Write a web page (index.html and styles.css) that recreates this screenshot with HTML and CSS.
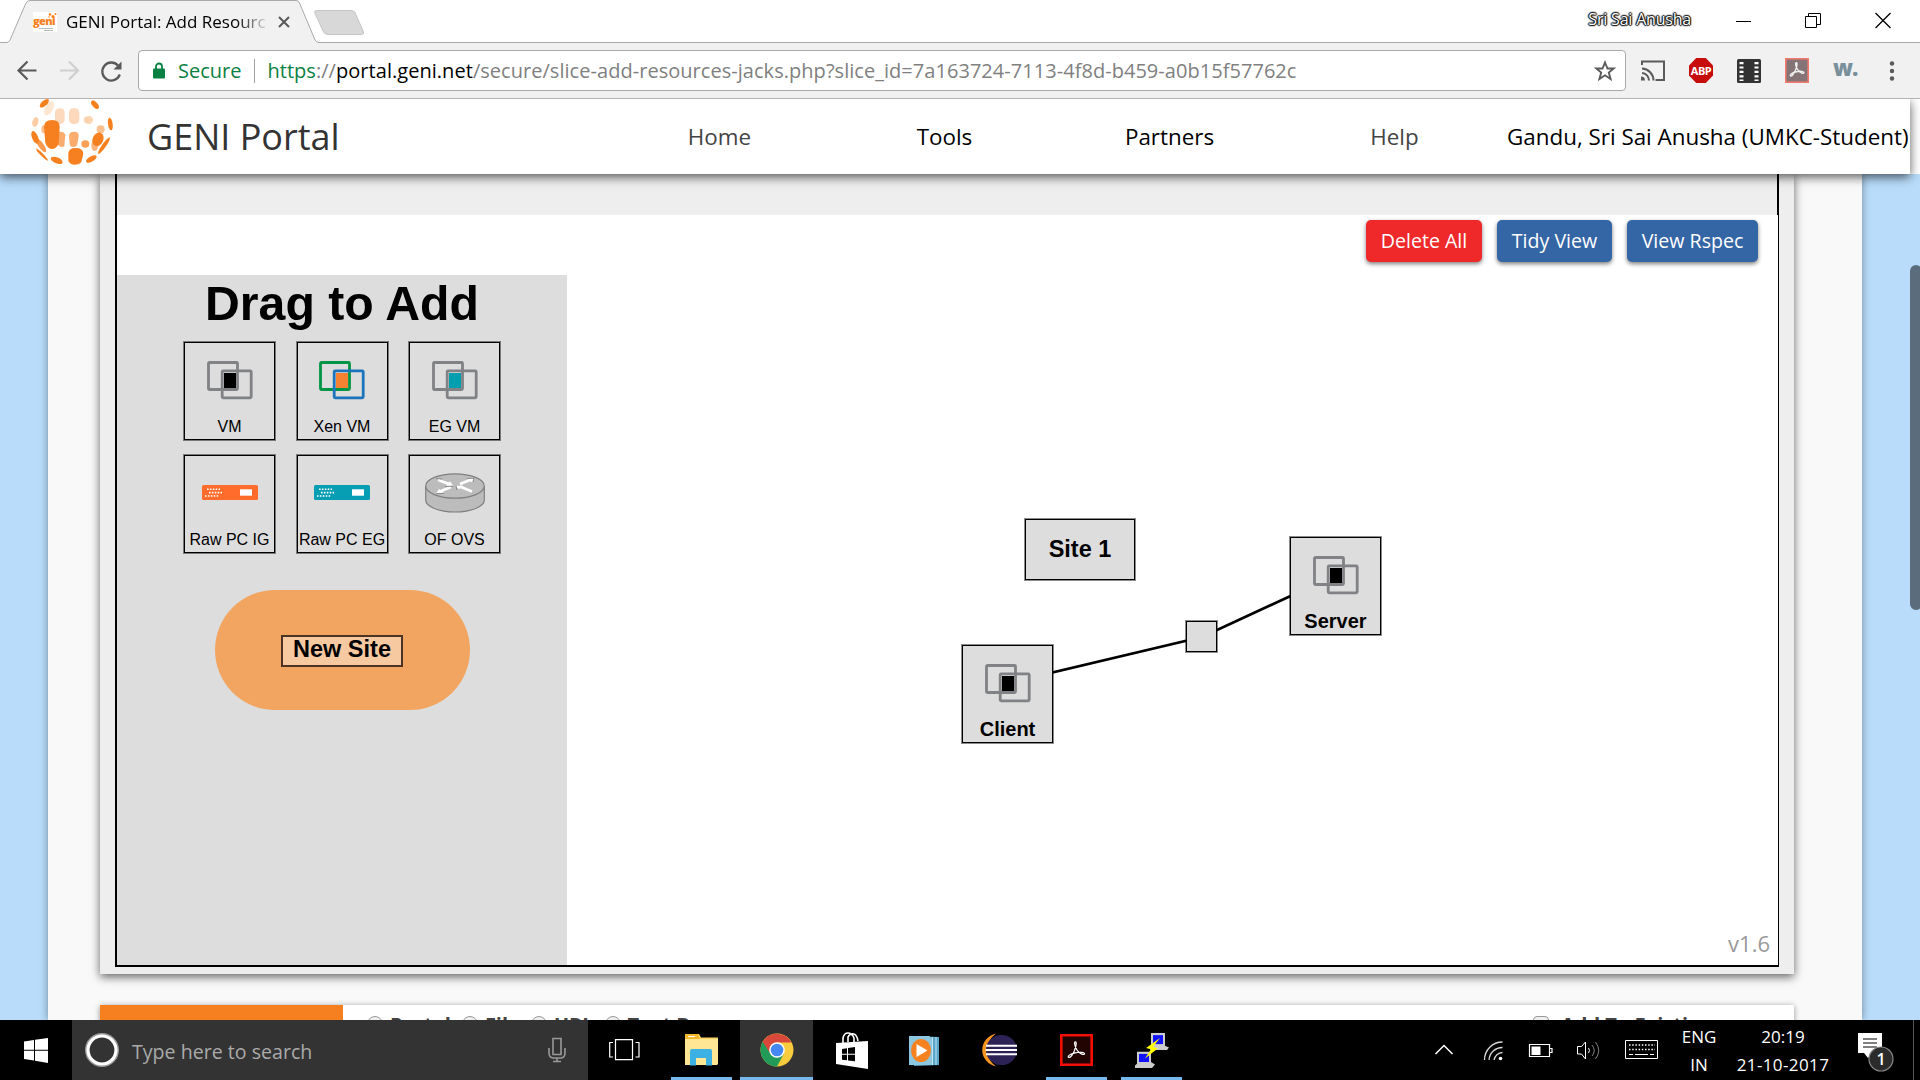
FILE: index.html
```html
<!DOCTYPE html>
<html lang="en">
<head>
<meta charset="utf-8">
<title>GENI Portal: Add Resources</title>
<link rel="stylesheet" href="styles.css">
</head>
<body>
<svg width="0" height="0" class="defs">
  <symbol id="vm" viewBox="0 0 46 39">
    <rect x="17" y="12" width="12" height="16" fill="var(--core,#000)"/>
    <rect x="1.5" y="1.5" width="29" height="27" rx="1" fill="none" stroke="var(--a,#808285)" stroke-width="2.8"/>
    <rect x="15.2" y="9.8" width="29" height="27" rx="1" fill="none" stroke="var(--b,#808285)" stroke-width="2.8"/>
  </symbol>
  <symbol id="pc" viewBox="0 0 56 15">
    <rect width="56" height="15" rx="1.5" fill="currentColor"/>
    <path d="M5 4.3h13M7 7.6h13M3 11h14" stroke="#fff" stroke-width="1.6" stroke-dasharray="1.6 1.3"/>
    <rect x="38" y="4.3" width="12" height="6.4" fill="#fff"/>
  </symbol>
</svg>

<div class="tabstrip">
  <svg class="tabs" width="380" height="43" viewBox="0 0 380 43">
    <path d="M0 42.5H7Q9 42 10 40L26 3Q27.500 .5 30 .5H296Q298.500 .5 299.500 3L315 40Q316.500 42.500 319 42.500H380V43H0Z" fill="#f1f1f1"/>
    <path d="M0 42.5H7Q9 42 10 40L26 3Q27.500 .5 30 .5H296Q298.500 .5 299.500 3L315 40Q316.500 42.500 319 42.500H380" fill="none" stroke="#a9a9a9"/>
    <path d="M317 10.500H351Q354 10.500 355 12.500L363.500 32Q364 34.500 361.500 34.500H328Q325 34.500 323.500 32L314.800 13Q314 10.500 317 10.500Z" fill="#d8d8d8" stroke="#c4c4c4"/>
  </svg>
  <div class="tab">
    <span class="favicon"><b>geni</b><svg width="24" height="20"><g fill="#f68020"><circle cx="17" cy="2.500" r="1.300"/><circle cx="20" cy="4.500" r="1.600"/><circle cx="22.500" cy="2" r="1"/><circle cx="16" cy="5" r=".8"/></g><path d="M6 16.500h14M11 18.500h9" stroke="#bbb" stroke-width="1"/></svg></span>
    <span class="tab-title">GENI Portal: Add Resourc</span>
    <svg width="12" height="12" viewBox="0 0 12 12"><path d="M1 1l10 10M11 1L1 11" stroke="#5a5a5a" stroke-width="2"/></svg>
  </div>
  <div class="window-buttons">
    <span class="profile">Sri Sai Anusha</span>
    <svg width="15" height="16"><path d="M0 8.500h15" stroke="#000"/></svg>
    <svg width="16" height="17"><path d="M.5 4.500h11v11H.5zM3.500 4.500v-3h12v11h-4" fill="none" stroke="#000"/></svg>
    <svg width="16" height="17"><path d="M.5 1l15 15M15.500 1l-15 15" stroke="#000" stroke-width="1.300"/></svg>
  </div>
</div>

<div class="toolbar">
  <svg class="nav-icons" width="110" height="24" viewBox="14 58 110 24">
    <path d="M36.500 69.500H19M27.500 60.500l-9 9 9 9" fill="none" stroke="#5a5a5a" stroke-width="2.200"/>
    <path d="M60 69.500h17.500M69 60.500l9 9-9 9" fill="none" stroke="#cfcfcf" stroke-width="2.200"/>
    <path d="M118 64.500a9 9 0 1 0 1.800 9" fill="none" stroke="#5a5a5a" stroke-width="2.300"/>
    <path d="M121.500 60.500v8h-8z" fill="#5a5a5a"/>
  </svg>
  <div class="omnibox">
    <svg width="12" height="17" viewBox="0 0 12 17"><rect y="6.500" width="12" height="10" rx="1" fill="#0b8043"/><path d="M3 7V4.500a3 3 0 0 1 6 0V7" fill="none" stroke="#0b8043" stroke-width="1.800"/></svg>
    <span class="secure">Secure</span>
    <i></i>
    <span class="url"><b>https</b>://<em>portal.geni.net</em>/secure/slice-add-resources-jacks.php?slice_id=7a163724-7113-4f8d-b459-a0b15f57762c</span>
    <svg class="star" width="22" height="22" viewBox="0 0 22 22"><path d="M11 2.500l2.500 6h6.200l-4.900 4 1.800 6.500L11 15.300 5.400 19l1.800-6.500-4.900-4h6.200z" fill="none" stroke="#5a5a5a" stroke-width="1.900"/></svg>
  </div>
  <div class="extensions">
    <svg width="24" height="24" viewBox="0 0 24 24"><path d="M1 6V2.500h22v18.500h-8.500" fill="none" stroke="#5a5a5a" stroke-width="2"/><path d="M1 9.500a12 12 0 0 1 11.500 12M1 14a7.500 7.500 0 0 1 7 7.500" fill="none" stroke="#5a5a5a" stroke-width="2"/><path d="M0 17.500a4 4 0 0 1 4 4H0z" fill="#5a5a5a"/></svg>
    <span class="abp">ABP</span>
    <svg width="24" height="24"><rect width="24" height="24" rx="1.500" fill="#333"/><path d="M4.500 3v19M19.500 3v19" stroke="#fff" stroke-width="4" stroke-dasharray="2.200 2.200"/></svg>
    <svg width="24" height="25" viewBox="0 0 24 25"><rect x=".8" y=".8" width="22.400" height="23.400" fill="#857475" stroke="#f0786c" stroke-width="1.600"/><path transform="translate(-4.500 -3.500)" d="M10 21.500c-1-1 1.500-3.500 6-4.300 4-.8 7.500-.3 7.500 1s-4 .5-6.300-3-2.500-7-1.300-7 .6 4-1 7.500-3.700 6.600-4.900 5.800z" fill="none" stroke="#eee" stroke-width="1.400"/></svg>
    <span class="w-ext">w.</span>
    <svg class="menu" width="6" height="24"><g fill="#5a5a5a"><circle cx="3" cy="4.500" r="2.200"/><circle cx="3" cy="12" r="2.200"/><circle cx="3" cy="19.500" r="2.200"/></g></svg>
  </div>
</div>

<header class="site-header">
  <svg class="logo" width="88" height="75" viewBox="84 297 264 225">
    <g fill="#f68020">
      <ellipse cx="133" cy="310" rx="17" ry="8" transform="rotate(-42 133 310)"/>
      <ellipse cx="285" cy="314" rx="15" ry="8" transform="rotate(48 285 314)"/>
      <ellipse cx="147" cy="325" rx="23" ry="12" transform="rotate(-62 147 325)" opacity=".2"/>
      <rect x="165" y="325" width="29" height="47" rx="13" opacity=".3"/>
      <rect x="207" y="325" width="31" height="47" rx="13" opacity=".3"/>
      <ellipse cx="265" cy="360" rx="14" ry="12" opacity=".35"/>
      <ellipse cx="106" cy="366" rx="9" ry="15" transform="rotate(15 106 366)" opacity=".4"/>
      <ellipse cx="331" cy="372" rx="7" ry="19" transform="rotate(-8 331 372)"/>
      <ellipse cx="302" cy="388" rx="12" ry="12" opacity=".5"/>
      <ellipse cx="130" cy="388" rx="6" ry="12" opacity=".5"/>
      <path d="M132 382q0-22 24-22t23 22l-3 49q-8 16-20 16t-20-18z"/>
      <path d="M176 396q18-3 20 10l-3 33q-12 6-19-5z" opacity=".65"/>
      <path d="M207 408q0-13 15-13t14 13l-4 25q-2 8-12 8t-11-9z" opacity=".65"/>
      <ellipse cx="256" cy="432" rx="12" ry="11" opacity=".75"/>
      <ellipse cx="105" cy="412" rx="9" ry="20" transform="rotate(-22 105 412)"/>
      <ellipse cx="123" cy="436" rx="8" ry="25" transform="rotate(-35 123 436)" opacity=".8"/>
      <ellipse cx="284" cy="437" rx="10" ry="16" opacity=".6"/>
      <ellipse cx="294" cy="418" rx="16" ry="21" transform="rotate(25 294 418)"/>
      <ellipse cx="312" cy="437" rx="6" ry="30" transform="rotate(35 312 437)"/>
      <ellipse cx="126" cy="464" rx="4" ry="25" transform="rotate(-45 126 464)"/>
      <path d="M205 461q0-17 22-17t23 17l-6 25q-6 8-20 8t-19-12z"/>
      <ellipse cx="170" cy="481" rx="19" ry="9" transform="rotate(22 170 481)"/>
      <ellipse cx="274" cy="477" rx="18" ry="8" transform="rotate(-30 274 477)"/>
    </g>
  </svg>
  <h1>GENI Portal</h1>
  <nav><span class="dim">Home</span><span>Tools</span><span>Partners</span><span class="dim">Help</span></nav>
  <span class="user">Gandu, Sri Sai Anusha (UMKC-Student)</span>
</header>

<div class="viewport">
  <main class="page">
    <section class="card">
      <div class="editor">
        <div class="editor-top"></div>
        <div class="actions">
          <button class="danger">Delete All</button>
          <button>Tidy View</button>
          <button>View Rspec</button>
        </div>
        <div class="workspace">
          <aside class="palette">
            <h2>Drag to Add</h2>
            <div class="tiles">
              <div class="node"><svg width="46" height="39"><use href="#vm"/></svg><span>VM</span></div>
              <div class="node xen"><svg width="46" height="39"><use href="#vm"/></svg><span>Xen VM</span></div>
              <div class="node eg"><svg width="46" height="39"><use href="#vm"/></svg><span>EG VM</span></div>
              <div class="node ig-pc"><svg width="56" height="15"><use href="#pc"/></svg><span>Raw PC IG</span></div>
              <div class="node eg-pc"><svg width="56" height="15"><use href="#pc"/></svg><span>Raw PC EG</span></div>
              <div class="node ovs"><svg width="60" height="40" viewBox="0 0 60 40"><path d="M.7 13v14c0 6.500 13 12 29.300 12s29.300-5.500 29.300-12V13" fill="#bcbcbc" stroke="#808080" stroke-width="1.200"/><ellipse cx="30" cy="13" rx="29.300" ry="12.200" fill="#bcbcbc" stroke="#808080" stroke-width="1.200"/><g stroke="#fff" stroke-width="2.600" fill="none"><path d="M13 7l11 4M47 18.500l-11-4.500M16 18l10-4M35 11l10-4"/></g><path d="M28 12.500l-7 .3 4-4.500zM31 13l7-.5-4 4zM11 20.500l3-4.500 5 3.500zM49 5l-2 4.500-5-3.500z" fill="#fff"/><path d="M11 5.500l6 .5M20 13.500h8M49 5l-1 4M11 20.500h8M31 13l1 4M42 5.500h7" stroke="#777" stroke-width=".7" fill="none"/></svg><span>OF OVS</span></div>
            </div>
            <div class="new-site"><span>New Site</span></div>
          </aside>
          <div class="canvas">
            <svg class="links" width="1211" height="690" viewBox="567 275 1211 690"><path d="M1008 683L1202 637L1336 575" fill="none" stroke="#000" stroke-width="2.700"/></svg>
            <div class="site">Site 1</div>
            <div class="joint"></div>
            <div class="node client"><svg width="46" height="39"><use href="#vm"/></svg><span>Client</span></div>
            <div class="node server"><svg width="46" height="39"><use href="#vm"/></svg><span>Server</span></div>
            <span class="version">v1.6</span>
          </div>
        </div>
      </div>
    </section>
    <section class="source">
      <div class="source-label"></div>
      <div class="choices"><i></i><b>Portal</b><i></i><b>File</b><i></i><b>URL</b><i></i><b>Text Box</b></div>
      <div class="choices add"><i class="check"></i><b>Add To Existing</b></div>
    </section>
  </main>
  <div class="scroll-thumb"></div>
</div>

<footer class="taskbar">
  <div class="start"><svg width="24" height="25" viewBox="0 0 24 25"><path d="M0 3.500l10-1.500v9.800H0zM11 1.800L24 0v11.800H11zM0 12.800h10v9.700L0 21zM11 12.800h13V25l-13-2.200z" fill="#fff"/></svg></div>
  <div class="search">
    <svg width="34" height="34" viewBox="0 0 34 34"><circle cx="17" cy="17" r="15" fill="none" stroke="#999" stroke-width="4"/><circle cx="17" cy="17" r="14" fill="none" stroke="#fff" stroke-width="3.200"/></svg>
    <span>Type here to search</span>
    <svg class="mic" width="18" height="26" viewBox="0 0 18 26"><path d="M5 1.500h8v16H5zM1 11v5q0 4.500 4 5h8q4-.5 4-5v-5M9 21v3.500M5 24.500h8" fill="none" stroke="#999" stroke-width="1.600"/></svg>
  </div>
  <div class="apps">
    <div class="nudge"><svg width="31" height="22"><path d="M6.500 .6h17v20h-17zM4 3.500H.700v14.500H4M26.500 3.500h3.500v14.500h-3.500" fill="none" stroke="#fff" stroke-width="1.200"/></svg></div>
    <div class="open"><svg width="33" height="32" viewBox="0 0 33 32"><path d="M0 2q0-2 2-2h12l2 3.500h17V29q0 2-2 2H2q-2 0-2-2z" fill="#fcd462"/><path d="M0 5h33v24q0 2-2 2H0z" fill="#ffe694"/><path d="M0 0h13l2 5H0z" fill="#f4b92c"/><path d="M3 2.500h7" stroke="#fff"/><path d="M5 31.500V17q0-2 2-2h18q2 0 2 2v14.500h-6V24H11v7.500z" fill="#3db1e3"/></svg></div>
    <div class="open active"><svg width="34" height="34" viewBox="0 0 34 34"><circle cx="17" cy="17" r="16.500" fill="#f9cc3d"/><path d="M17 17L2.700 8.800A16.500 16.500 0 0 0 17 33.500l7-13z" fill="#229b58"/><path d="M2.700 8.800A16.500 16.500 0 0 1 31.500 9.500H17L10 20z" fill="#d9483b"/><circle cx="17" cy="17" r="7.800" fill="#fff"/><circle cx="17" cy="17" r="6.300" fill="#4587f3"/></svg></div>
    <div><svg width="32" height="37" viewBox="0 0 32 37"><path d="M7 11V6q1-5 5-5t6 5v4M12 10V5q2-4 6-3 3 1 4 7" fill="none" stroke="#fff" stroke-width="1.600"/><path d="M0 11l32-2v28L0 32z" fill="#fff"/><path d="M6 17l5-.7v5.500H6zM12 16l7-1v6.800h-7zM6 22.800h5v5.500l-5-.6zM12 22.800h7v6.500l-7-.9z" fill="#000"/></svg></div>
    <div class="nudge"><svg width="30" height="31" viewBox="0 0 30 31"><path d="M5 1l25 1v28l-25 1z" fill="#58a5c9"/><path d="M0 1h20l3 2v27H0z" fill="#8cc7df"/><path d="M23.500 2v28M27 2v28" stroke="#c4e6f2"/><ellipse cx="12" cy="15.500" rx="10" ry="11.500" fill="#f58220"/><path d="M7.500 9l11 6.500-11 6.500z" fill="#fff"/></svg></div>
    <div class="nudge"><svg width="36" height="34" viewBox="0 0 36 36" preserveAspectRatio="none"><path d="M15 .5A18 18 0 0 0 15 35.500 22 22 0 0 1 15 .500z" fill="#f7941e"/><ellipse cx="20.500" cy="18" rx="15.500" ry="16" fill="#2c2255"/><path d="M5 13.500h31M4.500 18h31.500M5 22.500h31" stroke="#fff" stroke-width="2"/></svg></div>
    <div class="open"><svg width="33" height="32" viewBox="0 0 33 33" preserveAspectRatio="none"><rect x="1.300" y="1.300" width="30.400" height="30.400" fill="#220503" stroke="#f40f02" stroke-width="2.600"/><path d="M8.500 24c-1.300-.8 1.500-3.600 6.500-4.600 5-1 9.500-.7 9.500 1s-4.800.5-7.400-3.700-3.200-8.700-1.700-8.700.6 4.700-.9 9-4.500 8-6 7z" fill="none" stroke="#fff" stroke-width="1.200"/></svg></div>
    <div class="open"><svg width="34" height="35" viewBox="0 0 34 41" preserveAspectRatio="none"><path d="M16 0h14v15l4 2-2 3H15l1-3z" fill="#ccc"/><rect x="18" y="2.500" width="10" height="10.500" fill="#11f"/><path d="M2 22h14v12l4 3-3 4H0v-3l2-2z" fill="#ccc"/><rect x="4" y="24.500" width="10" height="9.500" fill="#11f"/><path d="M25 6L11 17.500l5 1.500-6 11L23 18l-5-1.500z" fill="#ff0"/></svg></div>
  </div>
  <div class="tray">
    <svg class="tray-icons" width="230" height="30" viewBox="1430 1035 230 30" fill="none" stroke="#fff">
      <path d="M1435.500 1054l8.500-8.500 8.500 8.500" stroke-width="1.500"/>
      <path d="M1484.500 1060a18 18 0 0 1 18-18M1489 1060a13.500 13.500 0 0 1 13.500-12.500M1494 1060a9 9 0 0 1 8.500-7.500" stroke-width="1.300" opacity=".85"/><circle cx="1500.500" cy="1058.500" r="1.800" fill="#fff" stroke="none"/>
      <path d="M1529.500 1044.500h20v12h-20zM1550 1048.500h2v4h-2" stroke-width="1.200"/><path d="M1531.500 1046.500h9v8.500h-9z" fill="#fff" stroke="none"/>
      <path d="M1577.500 1046.500h4l4-4.500v17l-4-5h-4z"/><path d="M1588.500 1048q2 2.500 0 5"/><path d="M1592 1045q4.500 5.500 0 11M1595.500 1042q6.500 8.500 0 17" opacity=".5"/>
      <path d="M1625.500 1040.500h32v18h-32z"/><path d="M1629 1045h26M1629 1049.500h26" stroke-width="1.400" stroke-dasharray="1.500 1.700"/><path d="M1629 1054.500h4M1635 1054.500h13M1650 1054.500h4"/>
    </svg>
    <div class="lang"><span>ENG</span><span>IN</span></div>
    <div class="clock"><span>20:19</span><span class="date">21-10-2017</span></div>
    <svg class="notify" width="40" height="40" viewBox="0 0 40 40"><path d="M1 1h24v20H15l-4 5-4-5H1z" fill="#fff"/><path d="M6 7h14M6 11h14M6 15h14" stroke="#000"/><circle cx="24" cy="27" r="12" fill="#2b2b2b" stroke="#888" stroke-width="1.200"/><text x="24" y="33" text-anchor="middle">1</text></svg>
  </div>
</footer>
</body>
</html>
```
FILE: styles.css
```css
* { box-sizing: border-box; }
body {
  margin: 0; width: 1920px; height: 1080px; overflow: hidden;
  display: flex; flex-direction: column;
  font-family: "Open Sans", "Noto Sans", sans-serif; background: #fff; color: #000;
}
svg { display: block; flex: none; }
span, b { white-space: nowrap; }
.defs { position: absolute; }

.tabstrip { height: 43px; flex: none; display: flex; justify-content: space-between; border-bottom: 1px solid #a9a9a9; position: relative; }
.tabs { position: absolute; left: 0; top: 0; }
.tab { position: relative; display: flex; align-items: center; padding-left: 33px; height: 43px; }
.favicon { width: 24px; height: 20px; background: #fff; position: relative; margin-right: 9px; }
.favicon b { position: absolute; left: 0; top: 2px; font-size: 11px; line-height: 14px; color: #f68020; font-weight: 800; letter-spacing: -.6px; }
.tab-title { width: 199px; margin-right: 13px; font-size: 17px; overflow: hidden; -webkit-mask: linear-gradient(90deg, #000 170px, transparent 204px); mask: linear-gradient(90deg, #000 170px, transparent 204px); }
.window-buttons { display: flex; align-items: center; height: 41px; padding-right: 29px; }
.window-buttons svg + svg { margin-left: 54px; }
.profile { font-size: 16px; line-height: 20px; color: #fff; margin: -3px 45px 0 0; letter-spacing: -.2px; text-shadow: 0 0 2px #000, 0 0 2px #000, 1px 0 1px #222, -1px 0 1px #222, 0 1px 1px #222, 0 -1px 1px #222; }

.toolbar { height: 56px; flex: none; background: #f1f1f1; border-bottom: 1px solid #b4b4b4; display: flex; align-items: center; padding-left: 14px; }
.omnibox { width: 1488px; height: 41px; margin-left: 14px; background: #fff; border: 1px solid #a9a9a9; border-radius: 4px; display: flex; align-items: center; padding: 0 9px 0 14px; font-size: 20px; }
.omnibox i { width: 1px; height: 24px; background: #a0a0a0; }
.secure { color: #0b8043; margin: 0 13px 0 13px; }
.url { margin-left: 12px; color: #808080; letter-spacing: .04px; }
.url b { font-weight: 400; color: #0b8043; }
.url em { font-style: normal; color: #000; }
.star { margin-left: auto; }
.extensions { display: flex; align-items: center; gap: 24px; padding-left: 15px; }
.menu { margin-left: 8px; }
.abp { width: 24px; height: 25px; background: #c70d0c; color: #fff; font: 700 11px/25px "Open Sans", sans-serif; text-align: center; letter-spacing: -.5px; clip-path: polygon(30% 0, 70% 0, 100% 30%, 100% 70%, 70% 100%, 30% 100%, 0 70%, 0 30%); }
.w-ext { width: 24px; font: 800 22px/24px "Open Sans", sans-serif; color: #78909c; letter-spacing: -1px; margin-top: -8px; }

.site-header { width: 1910px; height: 75px; flex: none; background: #fff; display: flex; align-items: center; padding-left: 28px; position: relative; z-index: 2; box-shadow: 0 3px 10px rgba(0,0,0,.65); clip-path: inset(0 -20px -20px 0); }
h1 { margin: 0 0 0 31px; width: 460px; font-size: 36px; font-weight: 400; line-height: 75px; color: #333; }
nav { display: grid; grid-template-columns: repeat(4, 225px); font-size: 22.4px; text-align: center; }
.dim { color: #444; }
.user { font-size: 22.4px; }

.viewport { flex: 1; min-height: 0; background: #b8dcfa; position: relative; padding: 0 58px 0 48px; overflow: hidden; }
.page { height: 846px; background: #f9f9f9; padding: 0 68px 0 52px; box-shadow: 0 0 8px rgba(0,0,0,.4); }
.card { height: 800px; background: #eee; padding: 0 15px 7px; box-shadow: 0 3px 9px rgba(0,0,0,.6); }
.editor { height: 793px; border: solid #000; border-width: 0 1px 2px 2px; background: #fff; }
.editor-top { height: 41px; background: #eee; border-right: 1px solid #000; }
.actions { height: 60px; display: flex; justify-content: flex-end; gap: 15px; padding: 5px 20px 0 0; }
button { height: 42px; width: 115px; border: 0; border-radius: 5px; background: #3465a4; color: #fff; font: 19.6px "Open Sans", sans-serif; padding: 0 0 2px; box-shadow: 0 2px 4px rgba(0,0,0,.5); }
button.danger { background: #ef2929; width: 116px; }
button:last-child { width: 131px; }
.workspace { display: flex; height: 690px; }

.palette { width: 450px; background: #ddd; font-family: "Liberation Sans", Arial, sans-serif; display: flex; flex-direction: column; align-items: center; }
h2 { margin: 0; font-size: 48.2px; line-height: 56px; height: 67px; }
.tiles { display: grid; grid-template-columns: repeat(3, 91px); gap: 14.500px 21.500px; }
.node { height: 98px; width: 91px; border: 1px solid #000; box-shadow: 0 0 0 1px rgba(0,0,0,.45); background: #ddd; display: flex; flex-direction: column; align-items: center; justify-content: space-between; padding: 18px 0 2px; font: 16px/21px "Liberation Sans", Arial, sans-serif; }
.xen { --a: #009444; --b: #1c75bc; --core: #f58233; }
.eg { --core: #009eae; }
.ig-pc, .eg-pc { padding-top: 29px; }
.ovs { padding-top: 17px; }
.ig-pc { color: #ff6c2c; }
.eg-pc { color: #079db2; }
.ig-pc span, .eg-pc span { color: #000; }
.new-site { width: 255px; height: 120px; margin-top: 37.500px; border-radius: 60px; background: #f2a561; display: flex; align-items: center; justify-content: center; }
.new-site span { width: 122px; height: 32px; border: 2px solid #4b3424; background: #f6c9a1; font-size: 23.500px; font-weight: 700; line-height: 25px; text-align: center; margin-top: 2px; }

.canvas { flex: 1; position: relative; font-family: "Liberation Sans", Arial, sans-serif; font-weight: 700; }
.canvas > * { position: absolute; }
.links { left: 0; top: 0; }
.canvas .node { font-weight: 700; font-size: 20px; }
.client { left: 395px; top: 370px; }
.server { left: 723px; top: 262px; }
.joint { left: 619px; top: 346px; width: 31px; height: 31px; border: 1px solid #000; box-shadow: 0 0 0 1px rgba(0,0,0,.45); background: #ddd; }
.site { left: 458px; top: 244px; width: 110px; height: 61px; border: 1px solid #000; box-shadow: 0 0 0 1px rgba(0,0,0,.45); background: #ddd; font-size: 23.500px; line-height: 58px; text-align: center; }
.version { right: 8px; bottom: 7px; font: 22px/30px "Open Sans", sans-serif; color: #999; }

.source { margin-top: 31px; height: 90px; background: #fff; display: flex; width: 1694px; box-shadow: 0 1px 6px rgba(0,0,0,.4); }
.source-label { width: 243px; background: #f68020; }
.choices { display: flex; padding: 11px 0 0 24px; font-size: 20px; line-height: 32px; color: #444; }
.choices b { margin: -7px 11px 0 7px; }
.choices i { width: 16px; height: 16px; border: 1.5px solid #999; border-radius: 50%; background: #eee; }
.choices .check { border-radius: 4px; }
.choices .check + b { margin-left: 12px; }
.add { margin-left: auto; width: 285px; }
.scroll-thumb { position: absolute; left: 1910px; top: 91px; width: 12px; height: 345px; border-radius: 6px; background: #5b6d7c; }

.taskbar { height: 60px; flex: none; background: #000; color: #fff; display: flex; z-index: 3; }
.start { width: 72px; display: flex; align-items: center; justify-content: center; }
.search { width: 516px; background: #333; display: flex; align-items: center; padding: 0 22px 0 13px; color: #aaa; font-size: 19.600px; gap: 13px; }
.search span { padding-top: 2px; }
.mic { margin-left: auto; }
.apps { display: flex; gap: 2px; padding-left: 2px; }
.apps div { width: 73px; display: flex; align-items: center; justify-content: center; }
.apps .nudge { padding-right: 5px; }
.apps .open { background: linear-gradient(#76b9ed, #76b9ed) center bottom / 61px 3px no-repeat; }
.apps .active { background: linear-gradient(#76b9ed, #76b9ed) center bottom / 73px 3px no-repeat #333; }
.tray { margin-left: auto; display: flex; align-items: center; border-right: 1px solid #555; margin-right: 6px; padding-right: 16px; }
.lang, .clock { display: flex; flex-direction: column; align-items: center; font-size: 17px; line-height: 28px; padding-top: 1px; }
.lang { width: 40px; margin-left: 19px; }
.clock { width: 100px; margin-left: 14px; }
.date { letter-spacing: .4px; }
.notify { margin: 4px 0 0 24px; }
.notify text { font: 600 16px "Open Sans", sans-serif; fill: #fff; }
```
